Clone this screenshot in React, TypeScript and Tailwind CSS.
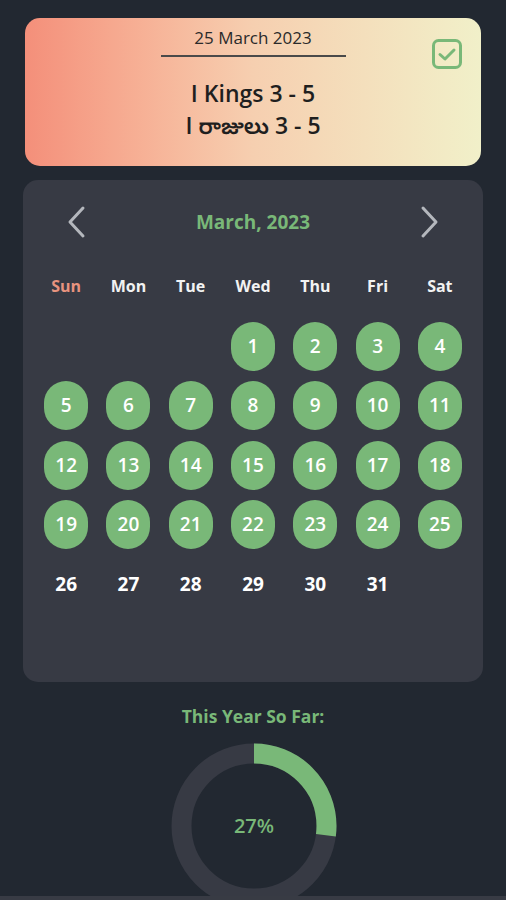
const FONT = { fontFamily: "'Open Sans', 'Noto Sans', 'Noto Sans Telugu', sans-serif" };

const weekdays = ["Sun", "Mon", "Tue", "Wed", "Thu", "Fri", "Sat"];
const readDays = 25;

const ChevronLeft = () => (
  <svg width="22" height="34" viewBox="0 0 22 34" fill="none">
    <polyline points="17,3 4,17 17,31" stroke="#b4b7bd" strokeWidth="3" strokeLinecap="round" strokeLinejoin="round" />
  </svg>
);

const ChevronRight = () => (
  <svg width="22" height="34" viewBox="0 0 22 34" fill="none">
    <polyline points="5,3 18,17 5,31" stroke="#b4b7bd" strokeWidth="3" strokeLinecap="round" strokeLinejoin="round" />
  </svg>
);

const CheckBox = () => (
  <svg width="32" height="32" viewBox="0 0 32 32" fill="none">
    <rect x="2.5" y="2.5" width="27" height="27" rx="5" stroke="#79b878" strokeWidth="3" />
    <polyline points="9,16.5 14,21 23,12" stroke="#79b878" strokeWidth="3" strokeLinecap="round" strokeLinejoin="round" />
  </svg>
);

const Donut = ({ percent }: { percent: number }) => {
  const r = 72.5;
  const c = 2 * Math.PI * r;
  return (
    <div className="relative w-[166px] h-[166px]">
      <svg width="166" height="166" viewBox="0 0 166 166">
        <circle cx="83" cy="83" r={r} fill="none" stroke="#373a44" strokeWidth="20" />
        <circle
          cx="83"
          cy="83"
          r={r}
          fill="none"
          stroke="#79b878"
          strokeWidth="20"
          strokeDasharray={`${(c * percent) / 100} ${c}`}
          transform="rotate(-90 83 83)"
        />
      </svg>
      <div className="absolute inset-0 flex items-center justify-center text-[20px] font-semibold text-[#79b878]">
        {percent}%
      </div>
    </div>
  );
};

export default function App() {
  const cells: (number | null)[] = [null, null, null];
  for (let d = 1; d <= 31; d++) cells.push(d);

  return (
    <div className="relative w-[506px] h-[900px] bg-[#222831] flex flex-col overflow-hidden" style={FONT}>
      <div className="shrink-0 mx-[25px] mt-[18px] h-[148px] rounded-[15px] bg-gradient-to-r from-[#f48f7a] via-[#f6cfb0] to-[#f1f0c9] relative flex flex-col items-center">
        <div className="mt-[8px] text-[17px] text-[#2a2a2a] leading-[24px]">25 March 2023</div>
        <div className="mt-[5px] w-[185px] h-[1.5px] bg-[#4a4a4a]" />
        <div className="mt-[21px] text-[23px] font-semibold text-[#1f1f1f] leading-[31px]">I Kings 3 - 5</div>
        <div className="mt-[1px] text-[23px] font-semibold text-[#1f1f1f] leading-[31px]">I రాజులు 3 - 5</div>
        <div className="absolute right-[18px] top-[20px]">
          <CheckBox />
        </div>
      </div>

      <div className="shrink-0 mx-[23px] mt-[14px] h-[502px] rounded-[15px] bg-[#373a44] flex flex-col">
        <div className="mt-[25px] flex items-center justify-between px-[43px]">
          <ChevronLeft />
          <div className="text-[19px] font-bold text-[#79b878]">March, 2023</div>
          <ChevronRight />
        </div>
        <div className="mt-[35px] grid grid-cols-7 px-[12px]">
          {weekdays.map((w, i) => (
            <div
              key={w}
              className={`text-center text-[16px] font-bold ${i === 0 ? "text-[#e8937f]" : "text-[#f2f2f2]"}`}
            >
              {w}
            </div>
          ))}
        </div>
        <div className="mt-[23px] grid grid-cols-7 px-[12px] gap-y-[9.5px]">
          {cells.map((d, i) => (
            <div key={i} className="h-[50px] flex items-center justify-center">
              {d !== null &&
                (d <= readDays ? (
                  <div className="w-[44px] h-[49px] rounded-full bg-[#79b878] flex items-center justify-center text-[19px] font-semibold text-white">
                    {d}
                  </div>
                ) : (
                  <div className="text-[19px] font-bold text-white">{d}</div>
                ))}
            </div>
          ))}
        </div>
      </div>

      <div className="shrink-0 mt-[22px] flex flex-col items-center">
        <div className="text-[17.5px] font-bold text-[#79b878] leading-[24px]">This Year So Far:</div>
        <div className="mt-[15px] ml-[2px]">
          <Donut percent={27} />
        </div>
      </div>

      <div className="absolute bottom-0 left-0 right-0 h-[4px] bg-[#383b44]" />
    </div>
  );
}
